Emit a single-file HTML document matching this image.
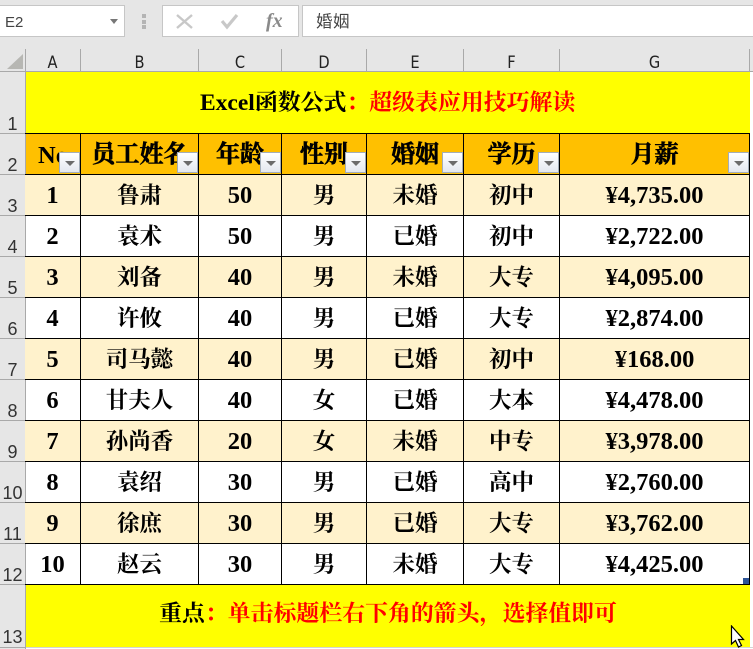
<!DOCTYPE html>
<html lang="zh-CN"><head><meta charset="utf-8"><title>Excel</title>
<style>
html,body{margin:0;padding:0;background:#fff}
#s{position:relative;width:753px;height:649px;overflow:hidden;background:#fff;font-family:"Liberation Serif","Noto Serif CJK SC",serif}
#s div{position:absolute;box-sizing:border-box}
.ui{font-family:"Liberation Sans","Noto Sans CJK SC",sans-serif;font-weight:400}
.b{border:1px solid #c6c6c6;background:#fff}
.ch{top:51px;height:22px;text-align:center;font:17px/24px "DejaVu Sans","Liberation Sans",sans-serif;color:#222;transform:scaleX(.86)}
.rh{left:0;width:25px;height:24px;text-align:center;font:18px/24px "Liberation Sans",sans-serif;color:#333}
.v{background:#000;width:1px;top:133px;height:452px}
.h{background:#000;left:25px;width:725px;height:1px}
.hg{background:#a9a9a9;left:0;width:25px;height:1px}
.t{font-weight:700;font-size:22.5px;line-height:44px;height:44px;text-align:center;color:#000;white-space:nowrap}
.t.a,.t.c,.t.g{font-size:24.5px}
.a{left:25px;width:55px}.bb{left:81px;width:117px}.c{left:199px;width:82px}.d{left:282px;width:84px}.e{left:367px;width:96px}.f{left:464px;width:95px}.g{left:560px;width:189px}
.hd{font-size:24px!important;-webkit-text-stroke:.6px #000}
.rw{left:25px;width:725px;height:41px}
.y{background:#fff2cc}
.fb{top:152px;width:21px;height:21px;background:linear-gradient(#fff,#e4e8ef);border:1px solid #a3adb8}
.fb:after{content:"";position:absolute;left:5px;top:8px;border:5px solid transparent;border-top:5px solid #6b6b6b;border-bottom:0}
.r{color:#f00}
.ti{font-size:22.9px}
</style></head><body><div id="s">

<!-- chrome -->
<div style="left:0;top:0;width:753px;height:72px;background:#e6e6e6"></div>
<div style="left:0;top:71px;width:25px;height:578px;background:#e6e6e6"></div>
<div class="b ui" style="left:-3px;top:5px;width:128px;height:32px;padding-left:7px;font-size:15px;line-height:33px;color:#444">E2</div>
<div style="left:110px;top:19px;border:4px solid transparent;border-top:5px solid #777;border-bottom:0;width:0;height:0"></div>
<div style="left:142px;top:14px;width:4px;height:4px;background:#b4b4b4"></div>
<div style="left:142px;top:20px;width:4px;height:4px;background:#b4b4b4"></div>
<div style="left:142px;top:25px;width:4px;height:4px;background:#b4b4b4"></div>
<div class="b" style="left:162px;top:5px;width:137px;height:32px"></div>
<svg style="position:absolute;left:176px;top:10px" width="80" height="22" fill="none"><path d="M1 5 16 18M16 5 1 18" stroke="#c8c8c8" stroke-width="2.4"/><path d="M46 11l5 6 10-12" stroke="#c8c8c8" stroke-width="3.2"/></svg>
<div style="left:266px;top:8px;font:italic 700 20px/26px 'Liberation Serif',serif;color:#8a8a8a">fx</div>
<div class="b" style="left:302px;top:5px;width:460px;height:32px"></div>
<div style="left:316px;top:8px;font:400 16.5px/24px 'Noto Sans CJK SC',sans-serif;color:#444;letter-spacing:.5px">婚姻</div>

<!-- column headers -->
<svg style="position:absolute;left:7px;top:53px" width="18" height="17"><path d="M16 1V16H0Z" fill="#b7b7b3"/></svg>
<div style="left:25px;top:49px;width:1px;height:600px;background:#a9a9a9"></div>
<div style="left:0;top:71px;width:753px;height:1px;background:#a9a9a9"></div>
<div style="left:80px;top:49px;width:1px;height:22px;background:#a9a9a9"></div>
<div style="left:198px;top:49px;width:1px;height:22px;background:#a9a9a9"></div>
<div style="left:281px;top:49px;width:1px;height:22px;background:#a9a9a9"></div>
<div style="left:366px;top:49px;width:1px;height:22px;background:#a9a9a9"></div>
<div style="left:463px;top:49px;width:1px;height:22px;background:#a9a9a9"></div>
<div style="left:559px;top:49px;width:1px;height:22px;background:#a9a9a9"></div>
<div style="left:749px;top:49px;width:1px;height:22px;background:#a9a9a9"></div>
<div class="ch a">A</div><div class="ch bb">B</div><div class="ch c">C</div><div class="ch d">D</div><div class="ch e">E</div><div class="ch f">F</div><div class="ch g">G</div>

<!-- row headers -->
<div class="rh" style="top:112px">1</div>
<div class="rh" style="top:153px">2</div>
<div class="rh" style="top:194px">3</div>
<div class="rh" style="top:235px">4</div>
<div class="rh" style="top:276px">5</div>
<div class="rh" style="top:317px">6</div>
<div class="rh" style="top:358px">7</div>
<div class="rh" style="top:399px">8</div>
<div class="rh" style="top:440px">9</div>
<div class="rh" style="top:481px">10</div>
<div class="rh" style="top:522px">11</div>
<div class="rh" style="top:563px">12</div>
<div class="rh" style="top:625px">13</div>
<div class="hg" style="top:133px"></div><div class="hg" style="top:174px"></div><div class="hg" style="top:215px"></div><div class="hg" style="top:256px"></div><div class="hg" style="top:297px"></div><div class="hg" style="top:338px"></div><div class="hg" style="top:379px"></div><div class="hg" style="top:420px"></div><div class="hg" style="top:461px"></div><div class="hg" style="top:502px"></div><div class="hg" style="top:543px"></div><div class="hg" style="top:584px"></div><div class="hg" style="top:647px"></div>

<!-- backgrounds -->
<div style="left:26px;top:72px;width:724px;height:61px;background:#ff0"></div>
<div style="left:26px;top:134px;width:724px;height:40px;background:#ffc000"></div>
<div class="rw y" style="top:175px"></div>
<div class="rw y" style="top:257px"></div>
<div class="rw y" style="top:339px"></div>
<div class="rw y" style="top:421px"></div>
<div class="rw y" style="top:503px"></div>
<div style="left:26px;top:585px;width:724px;height:62px;background:#ff0"></div>
<div style="left:26px;top:647px;width:727px;height:1px;background:#d4d4d4"></div>

<!-- grid lines -->
<div class="v" style="left:80px"></div><div class="v" style="left:198px"></div><div class="v" style="left:281px"></div><div class="v" style="left:366px"></div><div class="v" style="left:463px"></div><div class="v" style="left:559px"></div><div class="v" style="left:749px"></div>
<div class="h" style="top:133px"></div><div class="h" style="top:174px"></div><div class="h" style="top:215px"></div><div class="h" style="top:256px"></div><div class="h" style="top:297px"></div><div class="h" style="top:338px"></div><div class="h" style="top:379px"></div><div class="h" style="top:420px"></div><div class="h" style="top:461px"></div><div class="h" style="top:502px"></div><div class="h" style="top:543px"></div><div class="h" style="top:584px"></div>

<!-- title -->
<div class="t ti" style="left:26px;width:750px;top:81px;text-align:left;padding-left:174px"><span style="font-size:23.5px">Excel</span><span>函数公式</span><span class="r">：超级表应用技巧解读</span></div>

<!-- header row -->
<div class="t a" style="left:38px;top:134px;width:30px;text-align:left;overflow:hidden">No</div>
<div class="t bb hd" style="top:133px">员工姓名</div>
<div class="t c hd" style="top:133px">年龄</div>
<div class="t d hd" style="top:133px">性别</div>
<div class="t e hd" style="top:133px">婚姻</div>
<div class="t f hd" style="top:133px">学历</div>
<div class="t g hd" style="top:133px">月薪</div>
<div class="fb" style="left:59px"></div><div class="fb" style="left:177px"></div><div class="fb" style="left:260px"></div><div class="fb" style="left:345px"></div><div class="fb" style="left:442px"></div><div class="fb" style="left:538px"></div><div class="fb" style="left:728px"></div>

<!-- data -->
<div class="t a" style="top:174px">1</div><div class="t bb" style="top:174px">鲁肃</div><div class="t c" style="top:174px">50</div><div class="t d" style="top:174px">男</div><div class="t e" style="top:174px">未婚</div><div class="t f" style="top:174px">初中</div><div class="t g" style="top:174px">¥4,735.00</div>
<div class="t a" style="top:215px">2</div><div class="t bb" style="top:215px">袁术</div><div class="t c" style="top:215px">50</div><div class="t d" style="top:215px">男</div><div class="t e" style="top:215px">已婚</div><div class="t f" style="top:215px">初中</div><div class="t g" style="top:215px">¥2,722.00</div>
<div class="t a" style="top:256px">3</div><div class="t bb" style="top:256px">刘备</div><div class="t c" style="top:256px">40</div><div class="t d" style="top:256px">男</div><div class="t e" style="top:256px">未婚</div><div class="t f" style="top:256px">大专</div><div class="t g" style="top:256px">¥4,095.00</div>
<div class="t a" style="top:297px">4</div><div class="t bb" style="top:297px">许攸</div><div class="t c" style="top:297px">40</div><div class="t d" style="top:297px">男</div><div class="t e" style="top:297px">已婚</div><div class="t f" style="top:297px">大专</div><div class="t g" style="top:297px">¥2,874.00</div>
<div class="t a" style="top:338px">5</div><div class="t bb" style="top:338px">司马懿</div><div class="t c" style="top:338px">40</div><div class="t d" style="top:338px">男</div><div class="t e" style="top:338px">已婚</div><div class="t f" style="top:338px">初中</div><div class="t g" style="top:338px">¥168.00</div>
<div class="t a" style="top:379px">6</div><div class="t bb" style="top:379px">甘夫人</div><div class="t c" style="top:379px">40</div><div class="t d" style="top:379px">女</div><div class="t e" style="top:379px">已婚</div><div class="t f" style="top:379px">大本</div><div class="t g" style="top:379px">¥4,478.00</div>
<div class="t a" style="top:420px">7</div><div class="t bb" style="top:420px">孙尚香</div><div class="t c" style="top:420px">20</div><div class="t d" style="top:420px">女</div><div class="t e" style="top:420px">未婚</div><div class="t f" style="top:420px">中专</div><div class="t g" style="top:420px">¥3,978.00</div>
<div class="t a" style="top:461px">8</div><div class="t bb" style="top:461px">袁绍</div><div class="t c" style="top:461px">30</div><div class="t d" style="top:461px">男</div><div class="t e" style="top:461px">已婚</div><div class="t f" style="top:461px">高中</div><div class="t g" style="top:461px">¥2,760.00</div>
<div class="t a" style="top:502px">9</div><div class="t bb" style="top:502px">徐庶</div><div class="t c" style="top:502px">30</div><div class="t d" style="top:502px">男</div><div class="t e" style="top:502px">已婚</div><div class="t f" style="top:502px">大专</div><div class="t g" style="top:502px">¥3,762.00</div>
<div class="t a" style="top:543px">10</div><div class="t bb" style="top:543px">赵云</div><div class="t c" style="top:543px">30</div><div class="t d" style="top:543px">男</div><div class="t e" style="top:543px">未婚</div><div class="t f" style="top:543px">大专</div><div class="t g" style="top:543px">¥4,425.00</div>

<div style="left:743px;top:578px;width:6px;height:6px;background:#2f5597"></div>

<!-- footer -->
<div class="t ti" style="left:26px;width:724px;top:592px"><span>重点</span><span class="r">：单击标题栏右下角的箭头，选择值即可</span></div>

<!-- cursor -->
<svg style="position:absolute;left:730px;top:625px" width="16" height="24"><path d="M1.5 1V19L5.5 15.5 8.5 22 11.5 20.5 8.5 14.5H13.5Z" fill="#fff" stroke="#000" stroke-width="1.2"/></svg>
</div></body></html>
